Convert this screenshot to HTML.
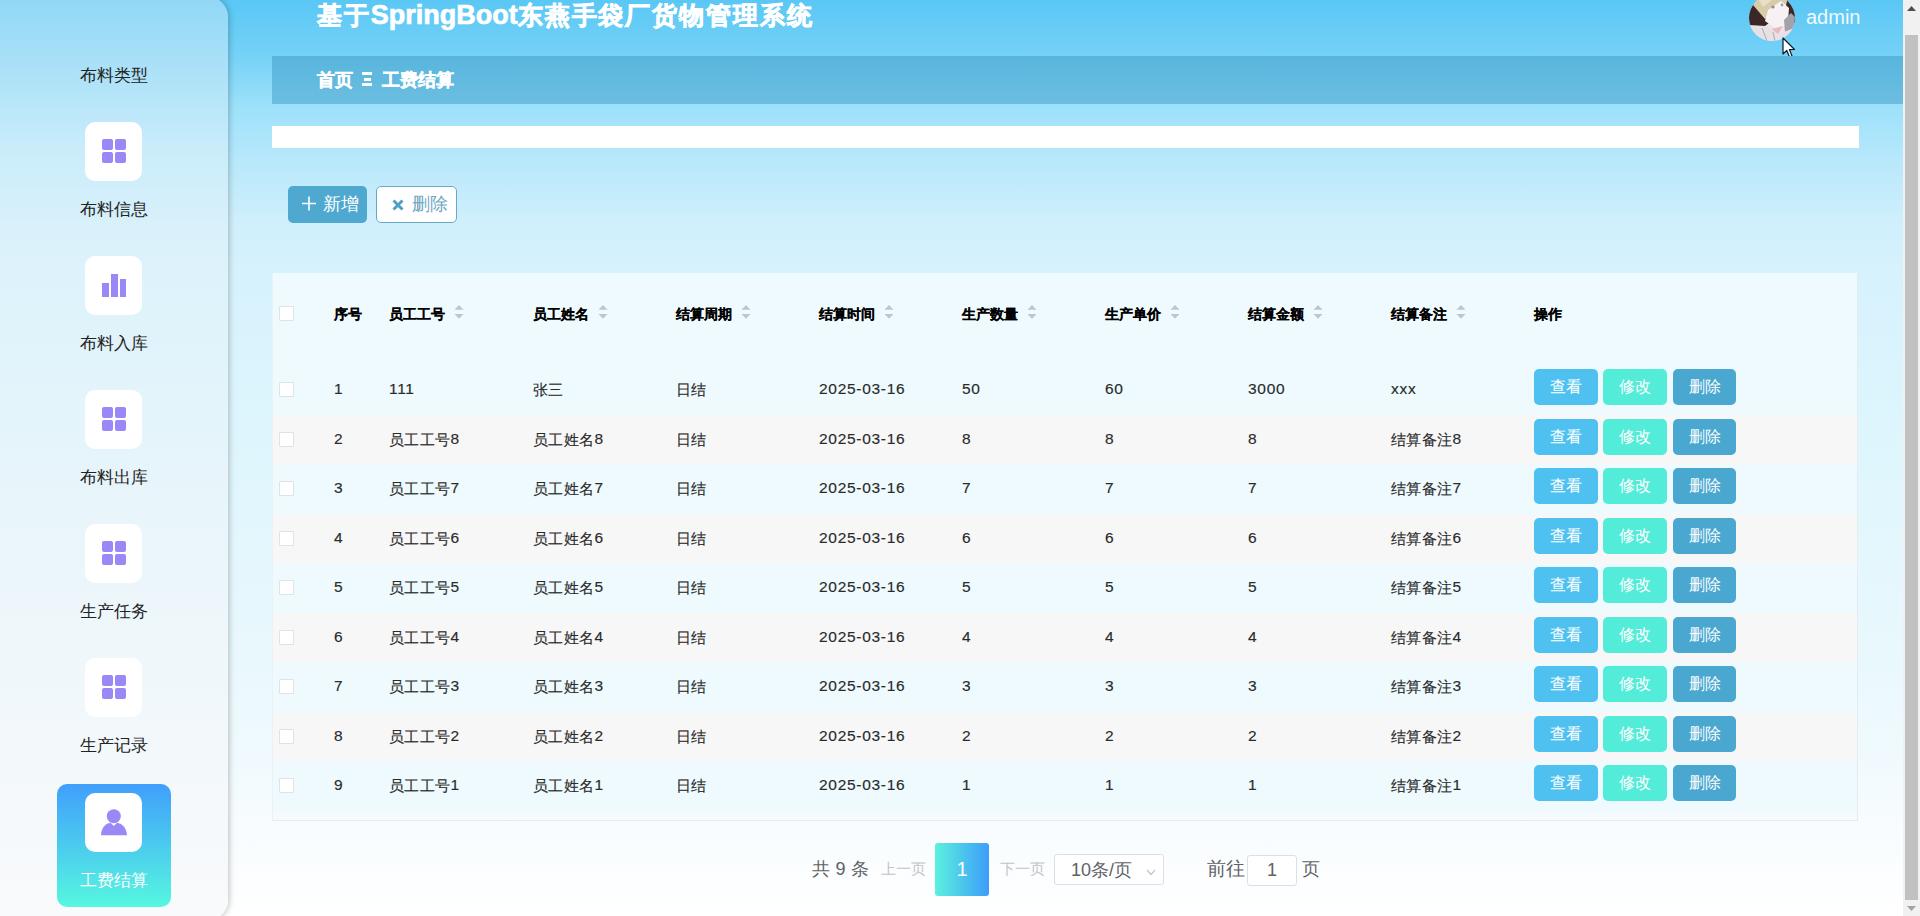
<!DOCTYPE html>
<html><head><meta charset="utf-8">
<style>
*{margin:0;padding:0;box-sizing:border-box}
html,body{width:1920px;height:916px;overflow:hidden}
body{font-family:"Liberation Sans",sans-serif;position:relative;background:linear-gradient(180deg,#5ac7f5 0px,#75d2f7 56px,#9be0f9 104px,#a6e4fb 126px,#b8e8fb 160px,#cfeffc 220px,#d6f2fd 270px,#ddf5fd 410px,#e8f8fd 640px,#f0fafe 760px,#f8fcfe 830px,#ffffff 916px)}
.abs{position:absolute;white-space:nowrap}
#side{position:absolute;left:0;top:-3px;width:228px;height:923px;border-radius:0 20px 20px 0;background:linear-gradient(180deg,#91d8f6 3px,#c9ecfa 150px,#dcf2fb 250px,#e4f4fb 420px,#eff7fa 650px,#f9fafc 923px);box-shadow:1px 0 6px rgba(0,0,0,.25)}
.it{position:absolute;left:0;width:228px;text-align:center;font-size:17px;color:#222;line-height:20px;height:20px}
.ib{position:absolute;left:85px;width:57px;height:59px;background:#fff;border-radius:10px}
.gq{position:absolute;width:11px;height:11px;background:#9b88f6;border-radius:2px}
.bar{position:absolute;background:#9b88f6}
#title{left:317px;top:-2px;font-size:24.5px;letter-spacing:1.9px;font-weight:bold;color:#fff;line-height:34px;-webkit-text-stroke:0.7px #fff}
#bc{left:272px;top:56px;width:1631px;height:48px;background:linear-gradient(180deg,#58b5dd,#6cbee1)}
#wbar{left:272px;top:126px;width:1587px;height:22px;background:#fff}
.btn{position:absolute;height:37px;border-radius:5px;font-size:18px;line-height:37px}
#tbl{left:272px;top:273px;width:1586px;height:548px;box-shadow:inset 1px 0 0 rgba(255,255,255,.7);background:linear-gradient(180deg,#eefafe 0,#eefafe 537px,#f4fafd 537px);border-bottom:1px solid #e4ecef}
.row{position:absolute;left:0;width:1586px}
.th{position:absolute;font-size:14px;font-weight:bold;color:#000;line-height:20px;top:30.5px;-webkit-text-stroke:0.1px #000}
.td{position:absolute;font-size:15px;color:#2a2a2a;line-height:20px;letter-spacing:0.4px;-webkit-text-stroke:0.15px #2a2a2a}
.td b{font-weight:normal;font-size:15.5px;letter-spacing:0.7px;position:relative;top:-1px}
.cb{position:absolute;left:7px;width:15px;height:15px;background:#fff;border:1px solid #dfe3e8;border-radius:1px}
.sort{position:absolute;width:10px;height:14px}
.ob{position:absolute;width:64px;height:36px;border-radius:5px;color:#fff;font-size:16px;line-height:36px;text-align:center}
</style></head><body>

<div id="side">
<div class="it" style="top:69px;color:#222">布料类型</div>
<div class="ib" style="top:125px">
<div class="gq" style="left:17px;top:17px"></div>
<div class="gq" style="left:30px;top:17px"></div>
<div class="gq" style="left:17px;top:30px"></div>
<div class="gq" style="left:30px;top:30px"></div>
</div>
<div class="it" style="top:203px;color:#222">布料信息</div>
<div class="ib" style="top:259px">
<div class="bar" style="left:17px;top:27px;width:6.5px;height:14px"></div>
<div class="bar" style="left:25.5px;top:17.5px;width:7px;height:23.5px"></div>
<div class="bar" style="left:34.5px;top:23px;width:6.5px;height:18px"></div>
</div>
<div class="it" style="top:337px;color:#222">布料入库</div>
<div class="ib" style="top:393px">
<div class="gq" style="left:17px;top:17px"></div>
<div class="gq" style="left:30px;top:17px"></div>
<div class="gq" style="left:17px;top:30px"></div>
<div class="gq" style="left:30px;top:30px"></div>
</div>
<div class="it" style="top:471px;color:#222">布料出库</div>
<div class="ib" style="top:527px">
<div class="gq" style="left:17px;top:17px"></div>
<div class="gq" style="left:30px;top:17px"></div>
<div class="gq" style="left:17px;top:30px"></div>
<div class="gq" style="left:30px;top:30px"></div>
</div>
<div class="it" style="top:605px;color:#222">生产任务</div>
<div class="ib" style="top:661px">
<div class="gq" style="left:17px;top:17px"></div>
<div class="gq" style="left:30px;top:17px"></div>
<div class="gq" style="left:17px;top:30px"></div>
<div class="gq" style="left:30px;top:30px"></div>
</div>
<div class="it" style="top:739px;color:#222">生产记录</div>
<div style="position:absolute;left:57px;top:787px;width:114px;height:123px;border-radius:10px;background:linear-gradient(180deg,#409ffc,#56f7e0)"></div>
<div class="ib" style="top:796px">
<svg style="position:absolute;left:0;top:0" width="57" height="59" viewBox="0 0 57 59"><circle cx="28.8" cy="23.2" r="7" fill="#9b88f6"/><path d="M16 42.3 C16.5 34 21 30.5 25.5 29.8 L28.8 33 L32 29.8 C36.5 30.5 41.5 34 42 42.3 Z" fill="#9b88f6"/></svg>
</div>
<div class="it" style="top:874px;color:#fff">工费结算</div>
</div>
<div class="abs" id="title">基于<span style="font-size:27px;letter-spacing:0">SpringBoot</span>东燕手袋厂货物管理系统</div>
<svg class="abs" style="left:1749px;top:-5px" width="46" height="46" viewBox="0 0 46 46"><defs><clipPath id="cc"><circle cx="23" cy="23" r="23"/></clipPath></defs><g clip-path="url(#cc)"><rect width="46" height="46" fill="#ebe4e8"/><polygon points="0,16 4,9 10,15 20,28 16,31 0,30" fill="#3b2628"/><polygon points="38,0 46,6 46,28 40,25 37,12" fill="#3b2628"/><polygon points="2,0 40,0 37,9 30,13 22,17 16,24 10,17 4,10" fill="#d8cba8"/><polygon points="8,2 18,0 22,6 14,12" fill="#e9dfc6"/><polygon points="19,15 32,6 40,13 39,27 31,35 23,31 16,26" fill="#f8f1f4"/><polygon points="35,25 42,18 46,22 45,33 36,37" fill="#a3a2ab"/><polygon points="0,31 16,31 24,35 31,39 45,33 46,46 0,46" fill="#e7e0e5"/><polygon points="23,34 34,31 29,39" fill="#e8b9c0"/><path d="M13 33 L18 46 M24 37 L26 46" stroke="#9a8f95" stroke-width="0.7"/><circle cx="24" cy="12" r="1.6" fill="#8d8c90"/><circle cx="33" cy="10" r="1.4" fill="#9aa0a2"/></g></svg>
<div class="abs" style="left:1806px;top:5px;font-size:20px;line-height:24px;color:#eefaff">admin</div>
<svg class="abs" style="left:1782px;top:37px" width="14" height="22" viewBox="0 0 14 22"><path d="M1 1 L1 17 L4.8 13.5 L7.5 20 L10 19 L7.4 12.6 L12.5 12.5 Z" fill="#fff" stroke="#0a1a2a" stroke-width="1.2" stroke-linejoin="round"/></svg>
<div class="abs" id="bc"></div>
<div class="abs" style="left:317px;top:69px;font-size:18px;font-weight:bold;color:#fff;line-height:22px;-webkit-text-stroke:0.4px #fff">首页</div>
<div class="abs" style="left:362px;top:72px;width:10px;height:3px;background:#fff"></div><div class="abs" style="left:363.5px;top:78px;width:7px;height:3px;background:#fff"></div><div class="abs" style="left:362px;top:83px;width:10px;height:3px;background:#fff"></div>
<div class="abs" style="left:382px;top:69px;font-size:18px;font-weight:bold;color:#fff;line-height:22px;-webkit-text-stroke:0.4px #fff">工费结算</div>
<div class="abs" id="wbar"></div>
<div class="btn" style="left:288px;top:186px;width:79px;background:#4ea8cf;color:#fff"><svg class="abs" style="left:14px;top:10px" width="14" height="15" viewBox="0 0 14 15"><path d="M7 0.5 V14.5 M0 7.5 H14" stroke="#fff" stroke-width="1.6"/></svg><span class="abs" style="left:35px;top:0">新增</span></div>
<div class="btn" style="left:376px;top:186px;width:81px;background:#fff;border:1px solid #6aa9c6;color:#6fa6c2"><svg class="abs" style="left:15px;top:12px" width="12" height="12" viewBox="0 0 12 12"><path d="M1.5 1.5 L10.5 10.5 M10.5 1.5 L1.5 10.5" stroke="#4d9fc6" stroke-width="2.9"/></svg><span class="abs" style="left:35px;top:-1px">删除</span></div>
<div class="abs" id="tbl">
<div class="cb" style="top:33px"></div>
<div class="th" style="left:62px">序号</div>
<div class="th" style="left:117px">员工工号</div>
<svg class="sort" style="left:182px;top:32px" viewBox="0 0 10 14"><path d="M5 0 L9.5 4.8 L0.5 4.8 Z M0.5 9 L9.5 9 L5 13.8 Z" fill="#c0c4cc"/></svg>
<div class="th" style="left:261px">员工姓名</div>
<svg class="sort" style="left:326px;top:32px" viewBox="0 0 10 14"><path d="M5 0 L9.5 4.8 L0.5 4.8 Z M0.5 9 L9.5 9 L5 13.8 Z" fill="#c0c4cc"/></svg>
<div class="th" style="left:404px">结算周期</div>
<svg class="sort" style="left:469px;top:32px" viewBox="0 0 10 14"><path d="M5 0 L9.5 4.8 L0.5 4.8 Z M0.5 9 L9.5 9 L5 13.8 Z" fill="#c0c4cc"/></svg>
<div class="th" style="left:547px">结算时间</div>
<svg class="sort" style="left:612px;top:32px" viewBox="0 0 10 14"><path d="M5 0 L9.5 4.8 L0.5 4.8 Z M0.5 9 L9.5 9 L5 13.8 Z" fill="#c0c4cc"/></svg>
<div class="th" style="left:690px">生产数量</div>
<svg class="sort" style="left:755px;top:32px" viewBox="0 0 10 14"><path d="M5 0 L9.5 4.8 L0.5 4.8 Z M0.5 9 L9.5 9 L5 13.8 Z" fill="#c0c4cc"/></svg>
<div class="th" style="left:833px">生产单价</div>
<svg class="sort" style="left:898px;top:32px" viewBox="0 0 10 14"><path d="M5 0 L9.5 4.8 L0.5 4.8 Z M0.5 9 L9.5 9 L5 13.8 Z" fill="#c0c4cc"/></svg>
<div class="th" style="left:976px">结算金额</div>
<svg class="sort" style="left:1041px;top:32px" viewBox="0 0 10 14"><path d="M5 0 L9.5 4.8 L0.5 4.8 Z M0.5 9 L9.5 9 L5 13.8 Z" fill="#c0c4cc"/></svg>
<div class="th" style="left:1119px">结算备注</div>
<svg class="sort" style="left:1184px;top:32px" viewBox="0 0 10 14"><path d="M5 0 L9.5 4.8 L0.5 4.8 Z M0.5 9 L9.5 9 L5 13.8 Z" fill="#c0c4cc"/></svg>
<div class="th" style="left:1262px">操作</div>
<div class="row" style="top:92.0px;height:49.5px;background:#eefafe">
<div class="cb" style="top:17px"></div>
<div class="td" style="left:62px;top:15.2px"><b>1</b></div>
<div class="td" style="left:117px;top:15.2px"><b>111</b></div>
<div class="td" style="left:261px;top:15.2px">张三</div>
<div class="td" style="left:404px;top:15.2px">日结</div>
<div class="td" style="left:547px;top:15.2px"><b>2025-03-16</b></div>
<div class="td" style="left:690px;top:15.2px"><b>50</b></div>
<div class="td" style="left:833px;top:15.2px"><b>60</b></div>
<div class="td" style="left:976px;top:15.2px"><b>3000</b></div>
<div class="td" style="left:1119px;top:15.2px"><b>xxx</b></div>
<div class="ob" style="left:1262px;top:4px;background:#4fc1f0">查看</div>
<div class="ob" style="left:1331px;top:4px;background:#53ecd8">修改</div>
<div class="ob" style="left:1401px;top:4px;width:63px;background:#4aa8d0">删除</div>
</div>
<div class="row" style="top:141.5px;height:49.5px;background:#f7f7f8">
<div class="cb" style="top:17px"></div>
<div class="td" style="left:62px;top:15.2px"><b>2</b></div>
<div class="td" style="left:117px;top:15.2px">员工工号<b>8</b></div>
<div class="td" style="left:261px;top:15.2px">员工姓名<b>8</b></div>
<div class="td" style="left:404px;top:15.2px">日结</div>
<div class="td" style="left:547px;top:15.2px"><b>2025-03-16</b></div>
<div class="td" style="left:690px;top:15.2px"><b>8</b></div>
<div class="td" style="left:833px;top:15.2px"><b>8</b></div>
<div class="td" style="left:976px;top:15.2px"><b>8</b></div>
<div class="td" style="left:1119px;top:15.2px">结算备注<b>8</b></div>
<div class="ob" style="left:1262px;top:4px;background:#4fc1f0">查看</div>
<div class="ob" style="left:1331px;top:4px;background:#53ecd8">修改</div>
<div class="ob" style="left:1401px;top:4px;width:63px;background:#4aa8d0">删除</div>
</div>
<div class="row" style="top:191.0px;height:49.5px;background:#eefafe">
<div class="cb" style="top:17px"></div>
<div class="td" style="left:62px;top:15.2px"><b>3</b></div>
<div class="td" style="left:117px;top:15.2px">员工工号<b>7</b></div>
<div class="td" style="left:261px;top:15.2px">员工姓名<b>7</b></div>
<div class="td" style="left:404px;top:15.2px">日结</div>
<div class="td" style="left:547px;top:15.2px"><b>2025-03-16</b></div>
<div class="td" style="left:690px;top:15.2px"><b>7</b></div>
<div class="td" style="left:833px;top:15.2px"><b>7</b></div>
<div class="td" style="left:976px;top:15.2px"><b>7</b></div>
<div class="td" style="left:1119px;top:15.2px">结算备注<b>7</b></div>
<div class="ob" style="left:1262px;top:4px;background:#4fc1f0">查看</div>
<div class="ob" style="left:1331px;top:4px;background:#53ecd8">修改</div>
<div class="ob" style="left:1401px;top:4px;width:63px;background:#4aa8d0">删除</div>
</div>
<div class="row" style="top:240.5px;height:49.5px;background:#f7f7f8">
<div class="cb" style="top:17px"></div>
<div class="td" style="left:62px;top:15.2px"><b>4</b></div>
<div class="td" style="left:117px;top:15.2px">员工工号<b>6</b></div>
<div class="td" style="left:261px;top:15.2px">员工姓名<b>6</b></div>
<div class="td" style="left:404px;top:15.2px">日结</div>
<div class="td" style="left:547px;top:15.2px"><b>2025-03-16</b></div>
<div class="td" style="left:690px;top:15.2px"><b>6</b></div>
<div class="td" style="left:833px;top:15.2px"><b>6</b></div>
<div class="td" style="left:976px;top:15.2px"><b>6</b></div>
<div class="td" style="left:1119px;top:15.2px">结算备注<b>6</b></div>
<div class="ob" style="left:1262px;top:4px;background:#4fc1f0">查看</div>
<div class="ob" style="left:1331px;top:4px;background:#53ecd8">修改</div>
<div class="ob" style="left:1401px;top:4px;width:63px;background:#4aa8d0">删除</div>
</div>
<div class="row" style="top:290.0px;height:49.5px;background:#eefafe">
<div class="cb" style="top:17px"></div>
<div class="td" style="left:62px;top:15.2px"><b>5</b></div>
<div class="td" style="left:117px;top:15.2px">员工工号<b>5</b></div>
<div class="td" style="left:261px;top:15.2px">员工姓名<b>5</b></div>
<div class="td" style="left:404px;top:15.2px">日结</div>
<div class="td" style="left:547px;top:15.2px"><b>2025-03-16</b></div>
<div class="td" style="left:690px;top:15.2px"><b>5</b></div>
<div class="td" style="left:833px;top:15.2px"><b>5</b></div>
<div class="td" style="left:976px;top:15.2px"><b>5</b></div>
<div class="td" style="left:1119px;top:15.2px">结算备注<b>5</b></div>
<div class="ob" style="left:1262px;top:4px;background:#4fc1f0">查看</div>
<div class="ob" style="left:1331px;top:4px;background:#53ecd8">修改</div>
<div class="ob" style="left:1401px;top:4px;width:63px;background:#4aa8d0">删除</div>
</div>
<div class="row" style="top:339.5px;height:49.5px;background:#f7f7f8">
<div class="cb" style="top:17px"></div>
<div class="td" style="left:62px;top:15.2px"><b>6</b></div>
<div class="td" style="left:117px;top:15.2px">员工工号<b>4</b></div>
<div class="td" style="left:261px;top:15.2px">员工姓名<b>4</b></div>
<div class="td" style="left:404px;top:15.2px">日结</div>
<div class="td" style="left:547px;top:15.2px"><b>2025-03-16</b></div>
<div class="td" style="left:690px;top:15.2px"><b>4</b></div>
<div class="td" style="left:833px;top:15.2px"><b>4</b></div>
<div class="td" style="left:976px;top:15.2px"><b>4</b></div>
<div class="td" style="left:1119px;top:15.2px">结算备注<b>4</b></div>
<div class="ob" style="left:1262px;top:4px;background:#4fc1f0">查看</div>
<div class="ob" style="left:1331px;top:4px;background:#53ecd8">修改</div>
<div class="ob" style="left:1401px;top:4px;width:63px;background:#4aa8d0">删除</div>
</div>
<div class="row" style="top:389.0px;height:49.5px;background:#eefafe">
<div class="cb" style="top:17px"></div>
<div class="td" style="left:62px;top:15.2px"><b>7</b></div>
<div class="td" style="left:117px;top:15.2px">员工工号<b>3</b></div>
<div class="td" style="left:261px;top:15.2px">员工姓名<b>3</b></div>
<div class="td" style="left:404px;top:15.2px">日结</div>
<div class="td" style="left:547px;top:15.2px"><b>2025-03-16</b></div>
<div class="td" style="left:690px;top:15.2px"><b>3</b></div>
<div class="td" style="left:833px;top:15.2px"><b>3</b></div>
<div class="td" style="left:976px;top:15.2px"><b>3</b></div>
<div class="td" style="left:1119px;top:15.2px">结算备注<b>3</b></div>
<div class="ob" style="left:1262px;top:4px;background:#4fc1f0">查看</div>
<div class="ob" style="left:1331px;top:4px;background:#53ecd8">修改</div>
<div class="ob" style="left:1401px;top:4px;width:63px;background:#4aa8d0">删除</div>
</div>
<div class="row" style="top:438.5px;height:49.5px;background:#f7f7f8">
<div class="cb" style="top:17px"></div>
<div class="td" style="left:62px;top:15.2px"><b>8</b></div>
<div class="td" style="left:117px;top:15.2px">员工工号<b>2</b></div>
<div class="td" style="left:261px;top:15.2px">员工姓名<b>2</b></div>
<div class="td" style="left:404px;top:15.2px">日结</div>
<div class="td" style="left:547px;top:15.2px"><b>2025-03-16</b></div>
<div class="td" style="left:690px;top:15.2px"><b>2</b></div>
<div class="td" style="left:833px;top:15.2px"><b>2</b></div>
<div class="td" style="left:976px;top:15.2px"><b>2</b></div>
<div class="td" style="left:1119px;top:15.2px">结算备注<b>2</b></div>
<div class="ob" style="left:1262px;top:4px;background:#4fc1f0">查看</div>
<div class="ob" style="left:1331px;top:4px;background:#53ecd8">修改</div>
<div class="ob" style="left:1401px;top:4px;width:63px;background:#4aa8d0">删除</div>
</div>
<div class="row" style="top:488.0px;height:49.5px;background:#eefafe">
<div class="cb" style="top:17px"></div>
<div class="td" style="left:62px;top:15.2px"><b>9</b></div>
<div class="td" style="left:117px;top:15.2px">员工工号<b>1</b></div>
<div class="td" style="left:261px;top:15.2px">员工姓名<b>1</b></div>
<div class="td" style="left:404px;top:15.2px">日结</div>
<div class="td" style="left:547px;top:15.2px"><b>2025-03-16</b></div>
<div class="td" style="left:690px;top:15.2px"><b>1</b></div>
<div class="td" style="left:833px;top:15.2px"><b>1</b></div>
<div class="td" style="left:976px;top:15.2px"><b>1</b></div>
<div class="td" style="left:1119px;top:15.2px">结算备注<b>1</b></div>
<div class="ob" style="left:1262px;top:4px;background:#4fc1f0">查看</div>
<div class="ob" style="left:1331px;top:4px;background:#53ecd8">修改</div>
<div class="ob" style="left:1401px;top:4px;width:63px;background:#4aa8d0">删除</div>
</div>
<div style="position:absolute;left:1585px;top:0;width:1px;height:548px;background:rgba(225,232,238,.8)"></div>
<div style="position:absolute;left:0;top:0;width:1px;height:548px;background:rgba(235,240,244,.9)"></div>
</div>
<div class="abs" style="left:812px;top:858px;font-size:18px;color:#606266;line-height:22px;letter-spacing:0.3px">共 9 条</div>
<div class="abs" style="left:881px;top:860px;font-size:15px;color:#c0c4cc;line-height:18px">上一页</div>
<div class="abs" style="left:935px;top:843px;width:54px;height:53px;border-radius:3px;background:linear-gradient(90deg,#5bf1df,#3d9df9);color:#fff;font-size:20px;line-height:53px;text-align:center">1</div>
<div class="abs" style="left:1000px;top:860px;font-size:15px;color:#c0c4cc;line-height:18px">下一页</div>
<div class="abs" style="left:1054px;top:854px;width:110px;height:31px;border:1px solid #dcdfe6;border-radius:3px;background:#fff"><span class="abs" style="left:16px;top:4px;font-size:18px;color:#606266;line-height:22px">10条/页</span><svg class="abs" style="left:91px;top:14px" width="10" height="7" viewBox="0 0 10 7"><path d="M1 1 L5 5.5 L9 1" fill="none" stroke="#c0c4cc" stroke-width="1.2"/></svg></div>
<div class="abs" style="left:1207px;top:858px;font-size:18.5px;color:#606266;line-height:22px">前往</div>
<div class="abs" style="left:1247px;top:855px;width:50px;height:31px;border:1px solid #dcdfe6;border-radius:3px;background:#fff;text-align:center;font-size:18px;color:#606266;line-height:29px">1</div>
<div class="abs" style="left:1302px;top:858px;font-size:18px;color:#606266;line-height:22px">页</div>
<div class="abs" style="left:1903px;top:0;width:17px;height:916px;background:#f1f1f1"></div>
<div class="abs" style="left:1905px;top:35px;width:13px;height:865px;background:#c1c1c1"></div>
<svg class="abs" style="left:1905px;top:4px" width="13" height="8" viewBox="0 0 13 8"><path d="M2 7 L6.5 2 L11 7 Z" fill="#505050"/></svg>
<svg class="abs" style="left:1905px;top:905px" width="13" height="8" viewBox="0 0 13 8"><path d="M2 1 L6.5 6 L11 1 Z" fill="#a3a3a3"/></svg>
</body></html>
